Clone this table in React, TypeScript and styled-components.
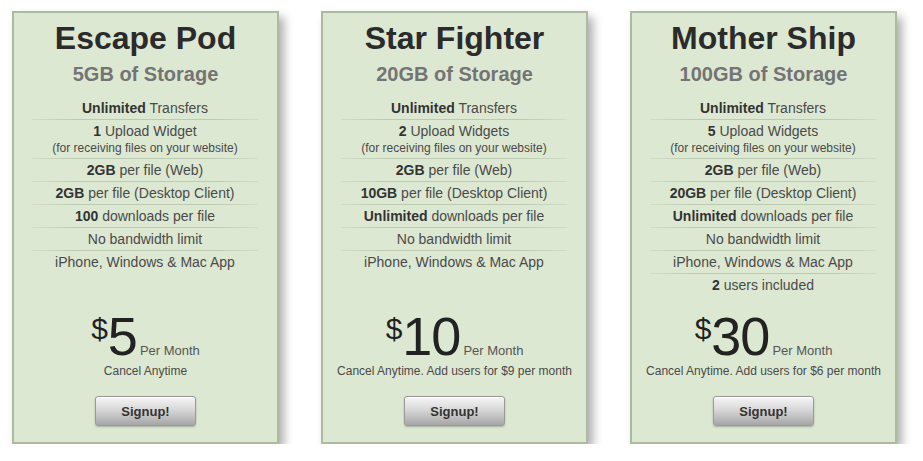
import React from 'react'
import styled, { createGlobalStyle } from 'styled-components'

type Feature = { bold?: string; text: string; note?: string }

type Plan = {
  name: string
  storage: string
  features: Feature[]
  price: string
  terms: string
}

const plans: Plan[] = [
  {
    name: 'Escape Pod',
    storage: '5GB of Storage',
    features: [
      { bold: 'Unlimited', text: ' Transfers' },
      { bold: '1', text: ' Upload Widget', note: '(for receiving files on your website)' },
      { bold: '2GB', text: ' per file (Web)' },
      { bold: '2GB', text: ' per file (Desktop Client)' },
      { bold: '100', text: ' downloads per file' },
      { text: 'No bandwidth limit' },
      { text: 'iPhone, Windows & Mac App' },
    ],
    price: '5',
    terms: 'Cancel Anytime',
  },
  {
    name: 'Star Fighter',
    storage: '20GB of Storage',
    features: [
      { bold: 'Unlimited', text: ' Transfers' },
      { bold: '2', text: ' Upload Widgets', note: '(for receiving files on your website)' },
      { bold: '2GB', text: ' per file (Web)' },
      { bold: '10GB', text: ' per file (Desktop Client)' },
      { bold: 'Unlimited', text: ' downloads per file' },
      { text: 'No bandwidth limit' },
      { text: 'iPhone, Windows & Mac App' },
    ],
    price: '10',
    terms: 'Cancel Anytime. Add users for $9 per month',
  },
  {
    name: 'Mother Ship',
    storage: '100GB of Storage',
    features: [
      { bold: 'Unlimited', text: ' Transfers' },
      { bold: '5', text: ' Upload Widgets', note: '(for receiving files on your website)' },
      { bold: '2GB', text: ' per file (Web)' },
      { bold: '20GB', text: ' per file (Desktop Client)' },
      { bold: 'Unlimited', text: ' downloads per file' },
      { text: 'No bandwidth limit' },
      { text: 'iPhone, Windows & Mac App' },
      { bold: '2', text: ' users included' },
    ],
    price: '30',
    terms: 'Cancel Anytime. Add users for $6 per month',
  },
]

const GlobalStyle = createGlobalStyle`
  html, body {
    margin: 0;
    padding: 0;
    background: #ffffff;
  }
  body {
    font-family: "Liberation Sans", Arial, sans-serif;
    color: #444;
  }
`

const Page = styled.div`
  display: flex;
  gap: 42px;
  padding: 11px 0 0 12px;
`

const Card = styled.div`
  box-sizing: border-box;
  width: 267px;
  height: 433px;
  display: flex;
  flex-direction: column;
  align-items: stretch;
  padding: 7px 0 16px;
  background: #dde8d2;
  border: 2px solid #abbaa0;
  box-shadow: 5px 6px 9px rgba(0, 0, 0, 0.32);
  text-align: center;
`

const Title = styled.h2`
  margin: 0;
  font-size: 32px;
  line-height: 36px;
  font-weight: bold;
  color: #2b2b2b;
`

const Storage = styled.h3`
  margin: 6px 0 0;
  font-size: 20px;
  line-height: 24px;
  font-weight: bold;
  color: #747474;
`

const FeatureList = styled.ul`
  list-style: none;
  margin: 11px 0 0;
  padding: 0 19px 0 18px;
`

const FeatureRow = styled.li`
  padding: 3px 0;
  font-size: 14px;
  line-height: 16px;
  color: #4a4a4a;
  border-bottom: 1px solid transparent;
  border-image: linear-gradient(to right, rgba(150, 165, 140, 0.15), #bccab2 20%, #bccab2 80%, rgba(150, 165, 140, 0.15)) 1;

  &:last-child {
    border-bottom: none;
  }

  b {
    color: #333;
  }
`

const Note = styled.div`
  margin-top: 2px;
  font-size: 12px;
  line-height: 14px;
  color: #4a4a4a;
`

const PriceBlock = styled.div`
  margin-top: auto;
  display: flex;
  flex-direction: column;
  align-items: center;
`

const PriceLine = styled.div`
  display: flex;
  align-items: baseline;
  white-space: nowrap;
`

const Dollar = styled.span`
  align-self: flex-start;
  margin-top: 5px;
  font-size: 30px;
  line-height: 30px;
  color: #222;
`

const Amount = styled.span`
  font-size: 54px;
  line-height: 54px;
  color: #222;
  letter-spacing: -1px;
`

const Period = styled.span`
  margin-left: 3px;
  font-size: 13px;
  color: #555;
`

const Terms = styled.div`
  margin-top: 1px;
  font-size: 12px;
  line-height: 14px;
  color: #4a4a4a;
`

const SignupButton = styled.button`
  margin-top: 18px;
  width: 101px;
  height: 30px;
  padding: 0;
  font-family: "Liberation Sans", Arial, sans-serif;
  font-size: 13px;
  font-weight: bold;
  color: #333;
  background: linear-gradient(to bottom, #f6f6f6 0%, #d8d8d8 45%, #a6a6a6 100%);
  border: 1px solid #9a9a9a;
  border-radius: 3px;
  box-shadow: 0 1px 2px rgba(0, 0, 0, 0.25), inset 0 1px 0 #ffffff;
  cursor: pointer;
`

const PlanCard = ({ plan }: { plan: Plan }) => (
  <Card>
    <Title>{plan.name}</Title>
    <Storage>{plan.storage}</Storage>
    <FeatureList>
      {plan.features.map((f, i) => (
        <FeatureRow key={i}>
          {f.bold && <b>{f.bold}</b>}
          {f.text}
          {f.note && <Note>{f.note}</Note>}
        </FeatureRow>
      ))}
    </FeatureList>
    <PriceBlock>
      <PriceLine>
        <Dollar>$</Dollar>
        <Amount>{plan.price}</Amount>
        <Period>Per Month</Period>
      </PriceLine>
      <Terms>{plan.terms}</Terms>
      <SignupButton>Signup!</SignupButton>
    </PriceBlock>
  </Card>
)

const App = () => (
  <>
    <GlobalStyle />
    <Page>
      {plans.map((p) => (
        <PlanCard key={p.name} plan={p} />
      ))}
    </Page>
  </>
)

export default App
